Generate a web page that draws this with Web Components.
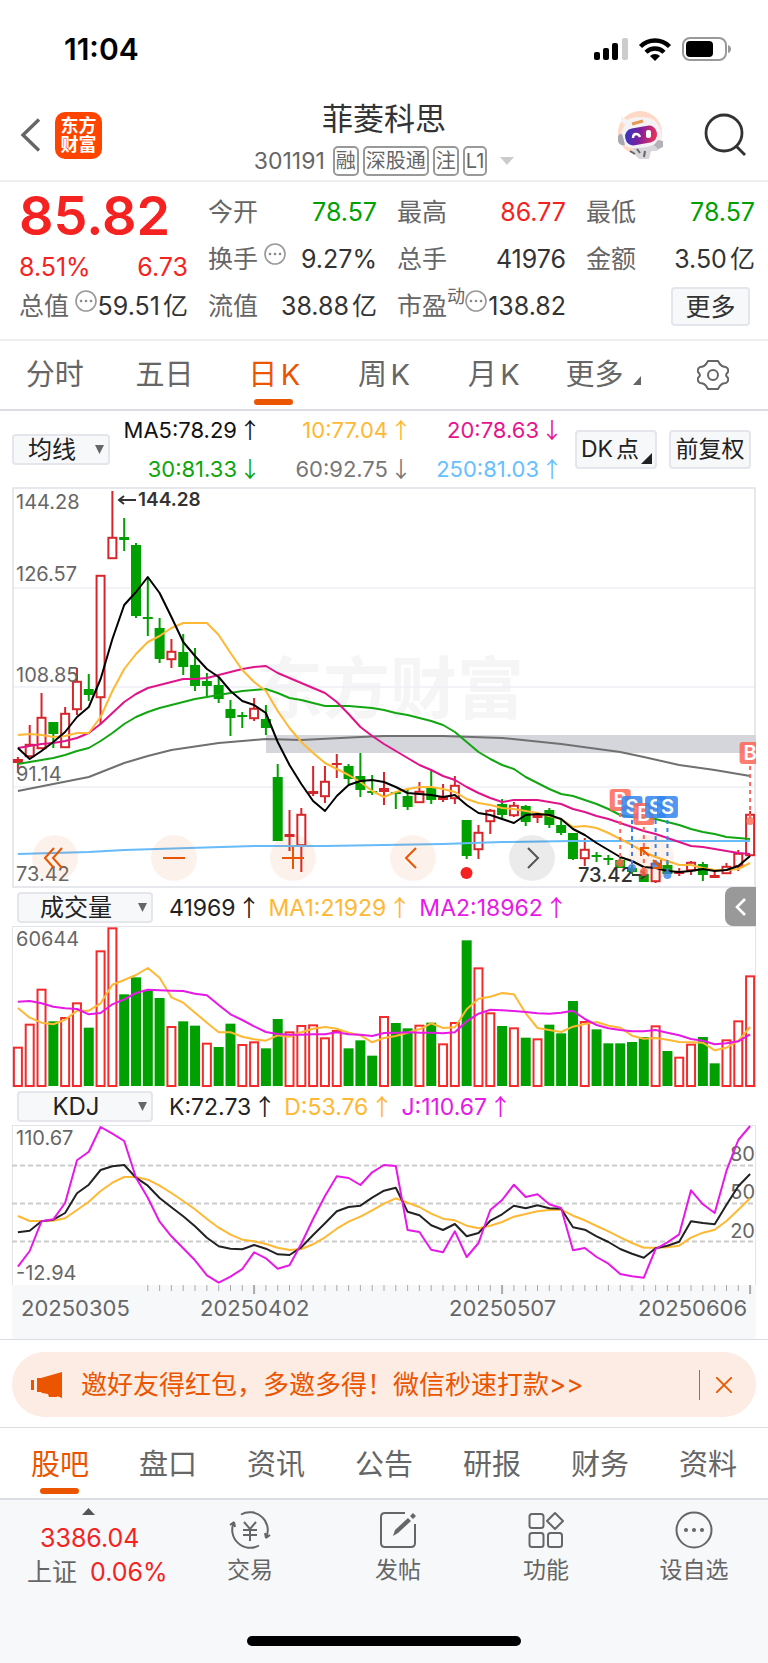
<!DOCTYPE html>
<html lang="zh-CN">
<head>
<meta charset="UTF-8">
<meta name="viewport" content="width=device-width, initial-scale=1">
<title>菲菱科思 301191</title>
<style>
  :root {
    --accent: #EB5500;
    --up: #F52222;
    --down: #00A000;
    --label: #666666;
    --ink: #333333;
    --line: #DCDDE3;
    --panel: #F7F8FA;
  }
  body {
    margin: 0;
    background: #fff;
    color: var(--ink);
    font-family: Inter, "Noto Sans CJK SC", sans-serif;
    text-autospace: normal;
  }
</style>
</head>
<body>
  <stock-app></stock-app>

<script>
// Attach an open shadow root and fill it in one go
class BaseElement extends HTMLElement {
  connectedCallback() {
    this.attachShadow({ mode: 'open' });
    this.shadowRoot.innerHTML = `
      <style>
        * { box-sizing: border-box; }
        button, select { font: inherit; color: inherit; margin: 0; padding: 0; border: 0; background: none; border-radius: 0; }
        a { color: inherit; text-decoration: none; }
        svg { display: block; }
      </style>
      ${this.render()}
    `;
  }
}

class StatusBar extends BaseElement {
  render() {
    return `
      <style>
        :host {
          display: flex;
          justify-content: space-between;
          align-items: center;
          height: 90px;
          padding: 8px 36px 0 64px;
          color: #000;
        }
        time { font-size: 30px; font-weight: 600; }
        .icons { display: flex; align-items: center; gap: 10px; }
      </style>
      <time>11:04</time>
      <div class="icons">
        <svg width="34" height="24" viewBox="0 0 34 24">
          <rect x="0" y="15" width="6" height="8" rx="2"/>
          <rect x="9" y="11" width="6" height="12" rx="2"/>
          <rect x="18" y="6" width="6" height="17" rx="2"/>
          <rect x="28" y="1" width="6" height="22" rx="2" fill="#ccc"/>
        </svg>
        <svg width="34" height="24" viewBox="0 0 34 24" fill="none" stroke="#000" stroke-width="4.4">
          <path d="M2.5 9.5a20.5 20.5 0 0 1 29 0"/>
          <path d="M8 15.2a12.8 12.8 0 0 1 18 0"/>
          <path d="M17 24l-5-5a7.2 7.2 0 0 1 10 0z" fill="#000" stroke="none"/>
        </svg>
        <svg width="50" height="24" viewBox="0 0 50 24">
          <rect x="1" y="1" width="43" height="22" rx="7" fill="none" stroke="#999" stroke-width="2"/>
          <rect x="4" y="4" width="27" height="16" rx="4"/>
          <path d="M46 8v8q3-1 3-4t-3-4z" fill="#999"/>
        </svg>
      </div>
    `;
  }
}
customElements.define('status-bar', StatusBar);

class StockHeader extends BaseElement {
  render() {
    return `
      <style>
        :host {
          display: grid;
          grid-template-columns: 1fr auto 1fr;
          height: 92px;
          padding: 0 20px;
          border-bottom: 2px solid #EEEEEE;
          align-items: center;
        }
        .side { display: flex; align-items: center; gap: 14px; }
        .right { justify-content: flex-end; gap: 40px; }
        .logo {
          width: 47px;
          height: 47px;
          border-radius: 10px;
          background: #FF4400;
          color: #fff;
          font-size: 18px;
          line-height: 19px;
          font-weight: 700;
          text-align: center;
          padding-top: 4px;
        }
        .stock { padding-top: 5px; }
        h1 { margin: 0; font-size: 31px; line-height: 40px; font-weight: 400; text-align: center; }
        .meta { display: flex; gap: 4px; align-items: center; margin-top: 7px; font-size: 23px; line-height: 30px; color: var(--label); }
        .tag {
          font-size: 20px;
          line-height: 26px;
          height: 30px;
          padding: 0 1px;
          border: 2px solid #999;
          border-radius: 5px;
        }
        .code { margin-right: 4px; }
        .meta svg { margin-left: 9px; }
      </style>
      <div class="side">
        <button aria-label="返回"><svg width="21" height="34" viewBox="0 0 21 34" fill="none" stroke="#666" stroke-width="3.4"><path d="M19 1.5L3 17l16 15.500"/></svg></button>
        <a class="logo" href="#">东方<br>财富</a>
      </div>
      <div class="stock">
        <h1>菲菱科思</h1>
        <div class="meta">
          <span class="code">301191</span>
          <span class="tag">融</span><span class="tag">深股通</span><span class="tag">注</span><span class="tag">L1</span>
          <svg width="14" height="8" viewBox="0 0 14 8" fill="#ccc"><path d="M0 0h14L7 8z"/></svg>
        </div>
      </div>
      <div class="side right">
        <button aria-label="智能助手">
          <svg width="46" height="48" viewBox="0 0 46 48">
            <defs>
              <linearGradient id="face" x1="0" y1="0" x2="1" y2="0.2">
                <stop offset="0" stop-color="#2a3cc0"/><stop offset="0.5" stop-color="#7a1fa0"/><stop offset="1" stop-color="#e03060"/>
              </linearGradient>
            </defs>
            <circle cx="22" cy="22" r="22" fill="#FFD9C6"/>
            <path d="M17 34l-3 7 7 7h10l2-8 6 0 4-3-1-8-5-1-4 6z" fill="#d9d6da"/>
            <path d="M3 6q0 6 4 8-5 6-4 15 2 8 13 8 14 0 21-4 8-3 6-13Q40 9 31 7 18 4 9 9 5 6 3 5z" fill="#f4f2f4"/>
            <path d="M0 25q4-5 5 1l2 8q-6 1-7-4z" fill="#aaa8b0"/>
            <path d="M40 29l5 1 0 6-5 2-4-4z" fill="#b4b2b8"/>
            <rect x="7" y="16" width="32" height="17" rx="8" fill="url(#face)" transform="rotate(-10 23 24)"/>
            <path d="M15 27q0-4 3-4t4 3" fill="none" stroke="#fff" stroke-width="2.400"/>
            <rect x="28" y="19" width="5" height="8" rx="2" fill="#fff"/>
            <path d="M14 13l11-3" stroke="#E39A55" stroke-width="3"/>
            <path d="M19 38l3 4m5-2l-1 6M12 40l5 3" stroke="#66636c" stroke-width="2"/>
          </svg>
        </button>
        <button aria-label="搜索"><svg width="44" height="44" viewBox="0 0 44 44" fill="none" stroke="#333" stroke-width="2.800"><circle cx="20" cy="20" r="18"/><path d="M32 33l9 9"/></svg></button>
      </div>
    `;
  }
}
customElements.define('stock-header', StockHeader);

// One "label ... value" pair of the quote table
class QuoteItem extends BaseElement {
  render() {
    const dots = `<svg width="22" height="22" viewBox="0 0 22 22"><circle cx="11" cy="11" r="10" fill="none" stroke="#999" stroke-width="1.6"/><g fill="#888"><circle cx="6" cy="11" r="1.300"/><circle cx="11" cy="11" r="1.300"/><circle cx="16" cy="11" r="1.300"/></g></svg>`;
    return `
      <style>
        :host { display: flex; align-items: center; font-size: 25px; line-height: 47px; white-space: nowrap; }
        .label { color: var(--label); }
        sup { font-size: 18px; line-height: 20px; color: var(--label); align-self: flex-start; margin-top: 4px; }
        svg { align-self: flex-start; margin-top: 7px; flex: none; }
        .label + svg { margin-left: 6px; }
        .value { margin-left: auto; }
      </style>
      <span class="label">${this.getAttribute('label')}</span>
      ${this.hasAttribute('mark') ? `<sup>${this.getAttribute('mark')}</sup>` : ''}
      ${this.hasAttribute('info') ? dots : ''}
      <span class="value"><slot></slot></span>
    `;
  }
}
customElements.define('quote-item', QuoteItem);

class QuotePanel extends BaseElement {
  render() {
    return `
      <style>
        :host {
          display: grid;
          grid-template-columns: repeat(4, minmax(0, 1fr));
          grid-template-rows: repeat(3, 47px);
          column-gap: 20px;
          padding: 7px 13px 9px 19px;
          border-bottom: 2px solid #EEEEEE;
        }
        .price { grid-row: span 2; color: var(--up); }
        .price strong { display: block; font-size: 54px; line-height: 54px; font-weight: 600; }
        .change { display: flex; justify-content: space-between; font-size: 25px; line-height: 48px; }
        .up { color: var(--up); }
        .down { color: var(--down); }
        .more {
          justify-self: end;
          align-self: center;
          margin-right: 5px;
          width: 79px;
          height: 39px;
          border: 2px solid #E4E6EB;
          border-radius: 4px;
          background: var(--panel);
          font-size: 25px;
          line-height: 34px;
        }
      </style>
      <div class="price">
        <strong>85.82</strong>
        <div class="change"><span>8.51%</span><span>6.73</span></div>
      </div>
      <quote-item label="今开" class="down">78.57</quote-item>
      <quote-item label="最高" class="up">86.77</quote-item>
      <quote-item label="最低" class="down">78.57</quote-item>
      <quote-item label="换手" info>9.27%</quote-item>
      <quote-item label="总手">41976</quote-item>
      <quote-item label="金额">3.50亿</quote-item>
      <quote-item label="总值" info>59.51亿</quote-item>
      <quote-item label="流值">38.88亿</quote-item>
      <quote-item label="市盈" mark="动" info>138.82</quote-item>
      <button class="more">更多</button>
    `;
  }
}
customElements.define('quote-panel', QuotePanel);

class TabItem extends BaseElement {
  render() {
    return `
      <style>
        :host { display: flex; justify-content: center; }
        button {
          position: relative;
          font-size: 29px;
          line-height: 64px;
          color: var(--label);
          white-space: nowrap;
        }
        :host([active]) button { color: var(--accent); }
        :host([active]) button::after {
          content: "";
          position: absolute;
          left: 50%;
          bottom: 4px;
          width: 39px;
          height: 6px;
          margin-left: -20px;
          border-radius: 3px;
          background: var(--accent);
        }
      </style>
      <button><slot></slot></button>
    `;
  }
}
customElements.define('tab-item', TabItem);

class PeriodTabs extends BaseElement {
  render() {
    return `
      <style>
        :host {
          display: grid;
          grid-template-columns: repeat(7, 1fr);
          height: 70px;
          border-bottom: 2px solid var(--line);
        }
        .gear { display: flex; justify-content: center; align-items: center; }
        .corner { display: inline-block; margin-left: 10px; }
      </style>
      <tab-item>分时</tab-item>
      <tab-item>五日</tab-item>
      <tab-item active>日K</tab-item>
      <tab-item>周K</tab-item>
      <tab-item>月K</tab-item>
      <tab-item>更多<svg class="corner" width="8" height="9" viewBox="0 0 8 9" fill="#666"><path d="M8 0v9H0z"/></svg></tab-item>
      <button class="gear" aria-label="设置">
        <svg width="32" height="30" viewBox="0 0 32 30" fill="none" stroke="#666" stroke-width="2">
          <path d="M11 1h10q2 4 4 5 2 1 4 1 3 2 2 5-2 2-2 3t2 3q1 3-2 5-2 0-4 1-2 1-4 5H11q-2-4-4-5-2-1-4-1-3-2-2-5 2-2 2-3t-2-3q-1-3 2-5 2 0 4-1 2-1 4-5z" stroke-linejoin="round"/>
          <circle cx="16" cy="15" r="5"/>
        </svg>
      </button>
    `;
  }
}
customElements.define('period-tabs', PeriodTabs);

// Number followed by a trend arrow
class TrendValue extends BaseElement {
  render() {
    return `
      <style>
        :host { display: block; white-space: nowrap; color: var(--c, #222); }
        .arrow { font-family: "Noto Sans CJK SC", sans-serif; margin-left: 2px; }
      </style>
      <slot></slot><span class="arrow">${this.hasAttribute('down') ? '↓' : '↑'}</span>
    `;
  }
}
customElements.define('trend-value', TrendValue);

// Native select drawn as a light grey button with a small triangle
class PickBox extends BaseElement {
  render() {
    return `
      <style>
        :host { display: flex; position: relative; }
        select {
          appearance: none;
          width: 100%;
          height: 31px;
          padding-right: 18px;
          border: 2px solid #E4E6EB;
          border-radius: 4px;
          background: var(--panel);
          font-size: 24px;
          line-height: 27px;
          text-align: center;
          text-align-last: center;
          color: #222;
        }
        svg { position: absolute; right: 6px; top: 11px; pointer-events: none; }
      </style>
      <select aria-label="${this.getAttribute('label')}"><option>${this.getAttribute('value')}</option></select>
      <svg width="9" height="9" viewBox="0 0 9 9" fill="#666"><path d="M0 0h9L4.500 9z"/></svg>
    `;
  }
}
customElements.define('pick-box', PickBox);

class AverageBar extends BaseElement {
  render() {
    return `
      <style>
        :host { display: flex; align-items: center; height: 76px; padding: 0 17px 0 12px; font-size: 23px; }
        pick-box { width: 98px; }
        .values { flex: 1; display: grid; grid-template-columns: repeat(3, 1fr); font-size: 22px; line-height: 37px; text-align: right; }
        button {
          position: relative;
          width: 82px;
          height: 39px;
          margin-left: 12px;
          border: 2px solid #E4E6EB;
          border-radius: 4px;
          background: var(--panel);
          line-height: 34px;
          color: #222;
          white-space: nowrap;
        }
        button.dk { text-align: left; padding-left: 4px; }
        button svg { position: absolute; right: 3px; bottom: 3px; }
      </style>
      <pick-box label="指标" value="均线"></pick-box>
      <div class="values">
        <trend-value style="--c:#111">MA5:78.29</trend-value>
        <trend-value style="--c:#FFB833">10:77.04</trend-value>
        <trend-value style="--c:#E6148C" down>20:78.63</trend-value>
        <trend-value style="--c:#0BA60B" down>30:81.33</trend-value>
        <trend-value style="--c:#777" down>60:92.75</trend-value>
        <trend-value style="--c:#66BFFF">250:81.03</trend-value>
      </div>
      <button class="dk">DK点<svg width="11" height="11" viewBox="0 0 11 11" fill="#222"><path d="M11 0v11H0z"/></svg></button>
      <button>前复权</button>
    `;
  }
}
customElements.define('average-bar', AverageBar);

// All charts share one 744 wide canvas split in 63 daily slots
const WIDTH = 744;
const DAYS = 63;
const slotX = (i) => (i + 0.5) * WIDTH / DAYS;

// values: one per day
const polyline = (values, color, y = (v) => v, width = 2) =>
  `<polyline fill="none" stroke="${color}" stroke-width="${width}" stroke-linejoin="round" points="${values.map((v, i) => `${slotX(i).toFixed(1)},${y(v).toFixed(1)}`).join(' ')}"/>`;

// pairs: [day, y] for slow lines that need few points
const sparseLine = (pairs, color) =>
  `<polyline fill="none" stroke="${color}" stroke-width="2" stroke-linejoin="round" points="${pairs.map(([i, y]) => `${slotX(i).toFixed(1)},${y}`).join(' ')}"/>`;

// [direction, high, body top, body bottom, low]; r = rising, g = falling
const CANDLES = [
  ['r',757,759,763,773],['r',725,744,757,757],['r',693,717,749,749],['g',722,722,734,748],['r',707,713,748,748],
  ['r',668,681,710,715],['g',674,689,695,701],['r',575,575,698,724],['r',491,537,559,559],['g',518,537,540,551],
  ['g',543,545,616,618],['g',577,617,619,636],['g',618,628,659,663],['r',639,651,660,668],['g',634,652,667,675],
  ['g',648,665,686,691],['g',673,681,686,696],['g',677,685,699,703],['g',700,709,718,736],['g',712,715,717,728],
  ['r',698,708,719,721],['g',705,719,728,735],['g',764,777,841,841],['r',810,834,837,851],['r',808,814,846,872],
  ['r',766,791,794,796],['r',766,781,797,803],['r',754,763,765,778],['g',764,766,779,784],['g',753,776,790,797],
  ['g',775,791,792,795],['r',772,788,792,805],['g',792,792,793,809],['g',788,796,807,810],['r',782,791,803,803],
  ['g',770,787,800,804],['r',784,797,800,802],['r',776,785,799,804],['g',820,820,856,859],['r',825,832,850,859],
  ['r',809,810,822,834],['g',799,804,815,820],['r',802,805,816,817],['g',805,806,822,826],['r',815,815,818,823],
  ['g',808,810,825,828],['g',820,825,833,835],['g',833,833,859,860],['r',838,849,859,866],['g',852,855,857,862],
  ['g',855,858,860,865],['g',857,860,868,868],['g',865,868,872,874],['g',867,874,882,882],['r',862,863,882,883],
  ['g',862,865,874,874],['r',868,872,874,876],['r',861,862,871,875],['g',862,864,875,881],['r',872,875,878,878],
  ['r',863,866,874,874],['r',850,853,867,871],['r',811,814,856,856]
];

const MA5 = [748,759,751,742,732,717,707,679,639,605,592,577,593,617,642,656,669,677,691,701,705,713,742,765,784,801,811,796,785,781,780,782,787,793,794,795,797,795,805,813,815,819,823,815,814,815,819,829,835,843,850,857,861,867,868,871,872,871,869,871,870,866,856];
const MA10 = [735,734,735,737,736,733,733,717,691,669,654,642,636,628,623,623,623,635,653,670,682,691,711,728,742,753,763,769,775,782,791,797,792,789,787,787,789,792,799,803,805,808,809,811,813,816,819,827,826,828,833,839,845,852,857,861,865,865,868,870,870,869,863];
const MA20 = [748,746,744,743,741,738,733,724,713,702,694,688,685,682,679,679,678,675,672,669,667,666,673,678,683,688,693,702,714,727,736,744,751,758,765,770,776,780,787,793,798,802,800,800,800,802,804,809,812,816,819,823,827,831,834,838,842,846,847,849,851,853,854];
const MA30 = [764,762,760,758,755,751,748,741,733,724,717,712,708,705,702,699,697,695,693,691,690,689,693,698,700,703,706,706,706,707,708,710,713,715,718,721,725,732,742,752,759,765,769,777,783,789,794,796,800,804,809,815,817,818,819,822,825,829,832,834,837,838,839];
const MA60 = [[0,791],[3,784],[6,777],[9,763],[11,756],[13,750],[17,743],[20,740],[21,739],[24,740],[29,737],[31,736],[36,736],[41,738],[46,744],[51,752],[53,757],[56,765],[59,770],[62,776]];
const MA250 = [[0,854],[6,852],[9,850],[20,846],[26,846],[36,844],[41,842],[47,841],[62,841]];

// [day, kind, badge top, dot y]
const TRADES = [
  [51,'B',789,863],[52,'S',796,868],[53,'B',803,872],[54,'S',796,865],[55,'S',796,875],[62,'B',742,821]
];

class KlineChart extends BaseElement {
  candle([dir, high, top, bottom, low], i) {
    const x = slotX(i);
    const color = dir === 'r' ? '#D7262B' : '#00A000';
    const hollow = dir === 'r' && bottom - top > 4;
    const wick = `<path d="M${x} ${high}V${top}M${x} ${bottom}V${low}" stroke="${color}" stroke-width="2"/>`;
    const body = hollow
      ? `<rect x="${x - 4}" y="${top + 0.8}" width="8" height="${bottom - top - 1.6}" fill="#fff" stroke="${color}" stroke-width="2"/>`
      : `<rect x="${x - 5}" y="${top}" width="10" height="${Math.max(bottom - top, 2)}" fill="${color}"/>`;
    return wick + body;
  }

  trade([i, kind, top, dot]) {
    const x = slotX(i);
    const color = kind === 'B' ? '#FF6655' : '#3385F0';
    return `
      <path d="M${x} ${top + 24}V${dot}" stroke="${color}" stroke-width="2" stroke-dasharray="4 4"/>
      <circle cx="${x}" cy="${dot}" r="4" fill="${color}" opacity="0.8"/>
      <rect x="${x - 10.5}" y="${top}" width="21" height="22" rx="3" fill="${color}" opacity="0.85"/>
      <text x="${x}" y="${top + 18}" text-anchor="middle" font-size="20" font-weight="600" fill="#fff">${kind}</text>
    `;
  }

  render() {
    const labels = [['144.28', 509], ['126.57', 581], ['108.85', 682], ['91.14', 781], ['73.42', 881]];
    return `
      <style>
        :host { display: block; position: relative; margin: 0 12px; }
        svg.plot { width: 100%; height: auto; font-family: Inter, "Noto Sans CJK SC", sans-serif; }
        .tools {
          position: absolute;
          left: 20px;
          right: 11%;
          bottom: 7px;
          display: flex;
          justify-content: space-between;
        }
        .tools button {
          width: 46px;
          height: 46px;
          border-radius: 50%;
          background: rgba(235, 85, 0, 0.08);
          display: grid;
          place-items: center;
        }
        .tools button.gray { background: rgba(0, 0, 0, 0.08); }
      </style>
      <svg class="plot" viewBox="0 487 744 401" role="img" aria-label="日K线">
        <text x="378" y="713" text-anchor="middle" font-size="67" font-weight="700" fill="#F5F5F6">东方财富</text>
        <path d="M0 588H744M0 687H744M0 787H744" stroke="#EEEFF5" stroke-width="1.500"/>
        <rect x="1" y="488" width="742" height="399" fill="none" stroke="#E2E3E9" stroke-width="1.600"/>
        <rect x="254" y="735" width="490" height="18" fill="#D4D6DB"/>
        ${CANDLES.map((c, i) => this.candle(c, i)).join('')}
        ${sparseLine(MA250, '#66BBF8')}
        ${sparseLine(MA60, '#707070')}
        ${polyline(MA30, '#12A612')}
        ${polyline(MA20, '#E0148A')}
        ${polyline(MA10, '#FFB833')}
        ${polyline(MA5, '#000')}
        ${labels.map(([t, y]) => `<text x="4" y="${y}" font-size="20" fill="#666">${t}</text>`).join('')}
        <text x="126" y="506" font-size="19" font-weight="600" fill="#333">144.28</text>
        <path d="M107 500H124M112 496l-5 4 5 4" fill="none" stroke="#333" stroke-width="2"/>
        <text x="566" y="882" font-size="20" font-weight="500" fill="#333">73.42</text>
        <path d="M620 875H634M629 871l5 4-5 4" fill="none" stroke="#333" stroke-width="2"/>
        <circle cx="454.500" cy="873" r="6" fill="#F52222"/>
        ${TRADES.map((t) => this.trade(t)).join('')}
      </svg>
      <div class="tools">
        <button aria-label="最左"><svg width="22" height="22" viewBox="0 0 22 22" fill="none" stroke="#EB5500" stroke-width="2"><path d="M10 1L1 11l9 10M18 1L9 11l9 10"/></svg></button>
        <button aria-label="缩小"><svg width="22" height="22" viewBox="0 0 22 22" stroke="#EB5500" stroke-width="2"><path d="M0 11h22"/></svg></button>
        <button aria-label="放大"><svg width="22" height="22" viewBox="0 0 22 22" stroke="#EB5500" stroke-width="2"><path d="M0 11h22M11 0v22"/></svg></button>
        <button aria-label="左移"><svg width="22" height="22" viewBox="0 0 22 22" fill="none" stroke="#EB5500" stroke-width="2"><path d="M14 1L4 11l10 10"/></svg></button>
        <button aria-label="右移" class="gray"><svg width="22" height="22" viewBox="0 0 22 22" fill="none" stroke="#555" stroke-width="2"><path d="M7 1l10 10L7 21"/></svg></button>
        <button aria-label="全屏"><svg width="22" height="22" viewBox="0 0 22 22" fill="none" stroke="#EB5500" stroke-width="2"><path d="M1 9V1h8M1 1l8 8M21 13v8h-8M21 21l-8-8"/></svg></button>
      </div>
    `;
  }
}
customElements.define('kline-chart', KlineChart);

// Header row above a sub chart: select on the left, values slotted in
class IndicatorRow extends BaseElement {
  render() {
    return `
      <style>
        :host { display: flex; align-items: center; gap: 8px; height: 38px; padding-left: 17px; font-size: 23px; line-height: 32px; position: relative; }
        pick-box { width: 136px; margin-right: 8px; }
      </style>
      <pick-box label="副图指标" value="${this.getAttribute('value')}"></pick-box>
      <slot></slot>
    `;
  }
}
customElements.define('indicator-row', IndicatorRow);

// Bar tops, stored in thirds of a canvas unit like every sub chart series
const VOLUMES = 'r470 r401 r296 g394 r381 r337 g413 r181 r112 g313 g262 g300 g324 r408 g394 g407 r458 g471 g401 r462 r454 g475 g387 r424 r405 r403 r442 r420 g475 g451 g497 r378 g399 g415 r404 g398 r460 r396 g151 r232 r367 g408 r412 g443 r445 g404 g430 g333 r393 g418 g460 g460 g456 g441 r406 g483 r500 r461 g441 g520 r448 r391 r256'.split(' ');
const VOL_MA1 = [354,383,398,403,389,362,362,340,284,270,255,234,263,322,338,368,398,427,427,440,448,452,436,440,427,416,411,416,428,436,457,444,438,428,418,400,414,412,358,326,320,309,313,370,414,420,426,410,402,396,407,413,437,446,444,449,456,457,458,481,473,453,411];
const VOL_MA2 = [335,333,340,350,355,357,373,369,343,328,309,299,301,302,303,311,316,345,373,390,409,426,432,434,434,433,433,427,433,434,438,429,428,427,428,428,430,427,394,371,359,361,363,366,370,371,368,362,387,405,415,420,424,424,420,428,436,447,452,463,460,454,433];
const K_LINE = [442,437,409,404,384,325,299,255,244,240,278,302,339,367,394,424,458,484,491,493,480,491,508,510,487,450,415,379,366,362,338,317,308,380,391,421,435,417,454,444,407,388,362,370,361,370,371,427,434,454,471,492,506,518,490,482,470,409,414,418,359,304,267];
const D_LINE = [393,408,408,407,400,375,350,318,293,276,276,284,302,324,348,373,402,428,449,464,469,477,488,495,492,478,457,431,410,395,376,356,340,353,366,386,401,406,422,430,422,411,395,387,379,375,374,392,406,423,439,457,474,488,488,487,482,458,443,434,408,374,340];
const J_LINE = [545,498,409,403,354,226,200,126,146,168,278,338,410,454,490,526,571,593,575,552,502,520,551,541,476,402,333,274,279,300,262,240,243,435,441,494,502,439,516,474,375,345,299,336,328,358,369,496,489,516,536,567,574,578,492,472,448,316,358,384,257,165,123];

class VolumeChart extends BaseElement {
  bar(entry, i) {
    const top = 890 + Number(entry.slice(1)) / 3;
    const x = slotX(i);
    return entry[0] === 'r'
      ? `<rect x="${x - 4}" y="${top + 1}" width="8" height="${1085 - top}" fill="#fff" stroke="#F52B2B" stroke-width="2"/>`
      : `<rect x="${x - 5}" y="${top}" width="10" height="${1086 - top}" fill="#00A000"/>`;
  }

  render() {
    const y = (v) => 890 + v / 3;
    return `
      <style>
        :host { display: block; margin: 0 12px; }
        svg { width: 100%; height: auto; font-family: Inter, sans-serif; }
      </style>
      <svg viewBox="0 926 744 161" role="img" aria-label="成交量">
        <path d="M0 926.500H743.500V1087M0.500 926V1087" fill="none" stroke="#E2E3E9"/>
        ${VOLUMES.map((v, i) => this.bar(v, i)).join('')}
        ${polyline(VOL_MA1, '#FFB833', y)}
        ${polyline(VOL_MA2, '#E619E6', y)}
        <text x="4" y="946" font-size="20" fill="#666">60644</text>
      </svg>
    `;
  }
}
customElements.define('volume-chart', VolumeChart);

class KdjChart extends BaseElement {
  ticks() {
    let out = '';
    for (let i = 11; i < DAYS; i++) {
      const major = [20, 41, 62].includes(i);
      out += `<path d="M${slotX(i).toFixed(1)} 1285v${major ? 9 : 6}" stroke="#AAA" stroke-width="${major ? 2 : 1}"/>`;
    }
    return out;
  }

  render() {
    const y = (v) => 1085 + v / 3;
    const dates = [['20250305', 9], ['20250402', 188], ['20250507', 437], ['20250606', 626]];
    return `
      <style>
        :host { display: block; margin: 0 12px; }
        svg { width: 100%; height: auto; font-family: Inter, sans-serif; }
      </style>
      <svg viewBox="0 1125 744 214" role="img" aria-label="KDJ">
        <path d="M0 1125.500H743.500V1285M0.500 1125V1285" fill="none" stroke="#E2E3E9"/>
        <rect x="0" y="1285" width="744" height="54" fill="#F7F8FA"/>
        <path d="M0 1165.500H744M0 1203.500H744M0 1241.500H744" stroke="#CCC" stroke-width="2" stroke-dasharray="5 3"/>
        <g font-size="20" fill="#666">
          <text x="4" y="1145">110.67</text>
          <text x="4" y="1280">-12.94</text>
          <text x="743" y="1161" text-anchor="end">80</text>
          <text x="743" y="1199" text-anchor="end">50</text>
          <text x="743" y="1238" text-anchor="end">20</text>
        </g>
        ${polyline(D_LINE, '#FFB833', y)}
        ${polyline(K_LINE, '#222', y)}
        ${polyline(J_LINE, '#E619E6', y)}
        ${this.ticks()}
        ${dates.map(([t, x]) => `<text x="${x}" y="1316" font-size="22" fill="#666">${t}</text>`).join('')}
      </svg>
    `;
  }
}
customElements.define('kdj-chart', KdjChart);

class PromoBanner extends BaseElement {
  render() {
    return `
      <style>
        :host { display: block; border-top: 1px solid var(--line); border-bottom: 1px solid #DDD; padding: 12px 12px 10px; }
        .pill {
          display: flex;
          align-items: center;
          height: 65px;
          padding: 0 24px 0 19px;
          border-radius: 33px;
          background: #FDECE4;
          color: var(--accent);
          font-size: 26px;
        }
        a { flex: 1; margin-left: 19px; padding-bottom: 4px; white-space: nowrap; }
        .rule { width: 1px; height: 30px; background: var(--accent); margin-right: 16px; }
      </style>
      <div class="pill">
        <svg width="31" height="26" viewBox="0 0 31 26" fill="#EB5500"><path d="M0 8h3v10H0zM6 6h4L31 0v26l-5-2v1h-8l-1-3-6-1-1-1H6z"/></svg>
        <a href="#">邀好友得红包，多邀多得！微信秒速打款&gt;&gt;</a>
        <span class="rule"></span>
        <button aria-label="关闭"><svg width="16" height="16" viewBox="0 0 16 16" stroke="#EB5500" stroke-width="1.800"><path d="M0 0l16 16M16 0L0 16"/></svg></button>
      </div>
    `;
  }
}
customElements.define('promo-banner', PromoBanner);

class SectionTabs extends BaseElement {
  render() {
    return `
      <style>
        :host { display: grid; grid-template-columns: repeat(7, 1fr); padding: 4px 6px 0; height: 72px; border-bottom: 2px solid var(--line); }
      </style>
      <tab-item active>股吧</tab-item>
      <tab-item>盘口</tab-item>
      <tab-item>资讯</tab-item>
      <tab-item>公告</tab-item>
      <tab-item>研报</tab-item>
      <tab-item>财务</tab-item>
      <tab-item>资料</tab-item>
    `;
  }
}
customElements.define('section-tabs', SectionTabs);

class BottomBar extends BaseElement {
  render() {
    return `
      <style>
        :host { display: flex; flex-direction: column; flex: 1; background: var(--panel); }
        nav { display: grid; grid-template-columns: 176px repeat(4, 1fr); }
        .index { padding: 8px 0 0 27px; font-size: 25px; line-height: 34px; color: var(--up); white-space: nowrap; }
        .index svg { margin-left: 55px; }
        .index .point { display: block; margin: 6px 0 0 13px; }
        .index .name { color: var(--label); margin-right: 6px; }
        .item { display: flex; flex-direction: column; align-items: center; padding-top: 11px; font-size: 23px; line-height: 34px; color: var(--label); }
        .item svg { margin-bottom: 4px; }
        .home { width: 274px; height: 10px; border-radius: 5px; background: #000; margin: auto auto 17px; }
      </style>
      <nav>
        <a class="index" href="#">
          <svg width="13" height="7" viewBox="0 0 13 7" fill="#555"><path d="M0 7h13L6.500 0z"/></svg>
          <span class="point">3386.04</span>
          <span class="name">上证</span> 0.06%
        </a>
        <button class="item">
          <svg width="42" height="38" viewBox="0 0 42 38" fill="none" stroke="#666" stroke-width="2">
            <path d="M12 3.500A18 18 0 0 1 37 27l4-3M37 27l-1-5M30 34.500A18 18 0 0 1 5 11l-4 3M5 11l1 5"/>
            <path d="M15 11l6 7 6-7M21 18v12M14 19h14M14 24h14"/>
          </svg>
          交易
        </button>
        <button class="item">
          <svg width="38" height="38" viewBox="0 0 38 38" fill="none" stroke="#666" stroke-width="2">
            <path d="M26 2H6q-4 0-4 4v26q0 4 4 4h26q4 0 4-4V13"/>
            <path d="M14 25l2-6L29 7l3 3-13 12zM31 5l3-3 3 3-3 3z" fill="#666" stroke="none"/>
          </svg>
          发帖
        </button>
        <button class="item">
          <svg width="36" height="38" viewBox="0 0 36 38" fill="none" stroke="#666" stroke-width="2">
            <rect x="1.500" y="3" width="14" height="14" rx="2.500"/>
            <rect x="1.500" y="22" width="14" height="14" rx="2.500"/>
            <rect x="20" y="22" width="14" height="14" rx="2.500"/>
            <path d="M27 2l8 8-8 8-8-8z" stroke-linejoin="round"/>
          </svg>
          功能
        </button>
        <button class="item">
          <svg width="38" height="38" viewBox="0 0 38 38" fill="none" stroke="#666" stroke-width="2">
            <circle cx="19" cy="19" r="17.500"/>
            <g fill="#666" stroke="none"><circle cx="11" cy="19" r="2"/><circle cx="19" cy="19" r="2"/><circle cx="27" cy="19" r="2"/></g>
          </svg>
          设自选
        </button>
      </nav>
      <div class="home"></div>
    `;
  }
}
customElements.define('bottom-bar', BottomBar);

class StockApp extends BaseElement {
  render() {
    return `
      <style>
        :host { display: flex; flex-direction: column; min-height: 100vh; }
        .expand {
          position: absolute;
          right: 12px;
          top: -1px;
          width: 31px;
          height: 39px;
          border-radius: 8px 0 0 8px;
          background: #999;
          display: grid;
          place-items: center;
        }
      </style>
      <status-bar></status-bar>
      <stock-header></stock-header>
      <quote-panel></quote-panel>
      <period-tabs></period-tabs>
      <average-bar></average-bar>
      <kline-chart></kline-chart>
      <indicator-row value="成交量">
        <trend-value style="--c:#222">41969</trend-value>
        <trend-value style="--c:#FFB833">MA1:21929</trend-value>
        <trend-value style="--c:#E619E6">MA2:18962</trend-value>
        <button class="expand" aria-label="展开"><svg width="12" height="18" viewBox="0 0 12 18" fill="none" stroke="#fff" stroke-width="2.600"><path d="M10 1L2 9l8 8"/></svg></button>
      </indicator-row>
      <volume-chart></volume-chart>
      <indicator-row value="KDJ">
        <trend-value style="--c:#222">K:72.73</trend-value>
        <trend-value style="--c:#FFB833">D:53.76</trend-value>
        <trend-value style="--c:#E619E6">J:110.67</trend-value>
      </indicator-row>
      <kdj-chart></kdj-chart>
      <promo-banner></promo-banner>
      <section-tabs></section-tabs>
      <bottom-bar></bottom-bar>
    `;
  }
}
customElements.define('stock-app', StockApp);
</script>
</body>
</html>
